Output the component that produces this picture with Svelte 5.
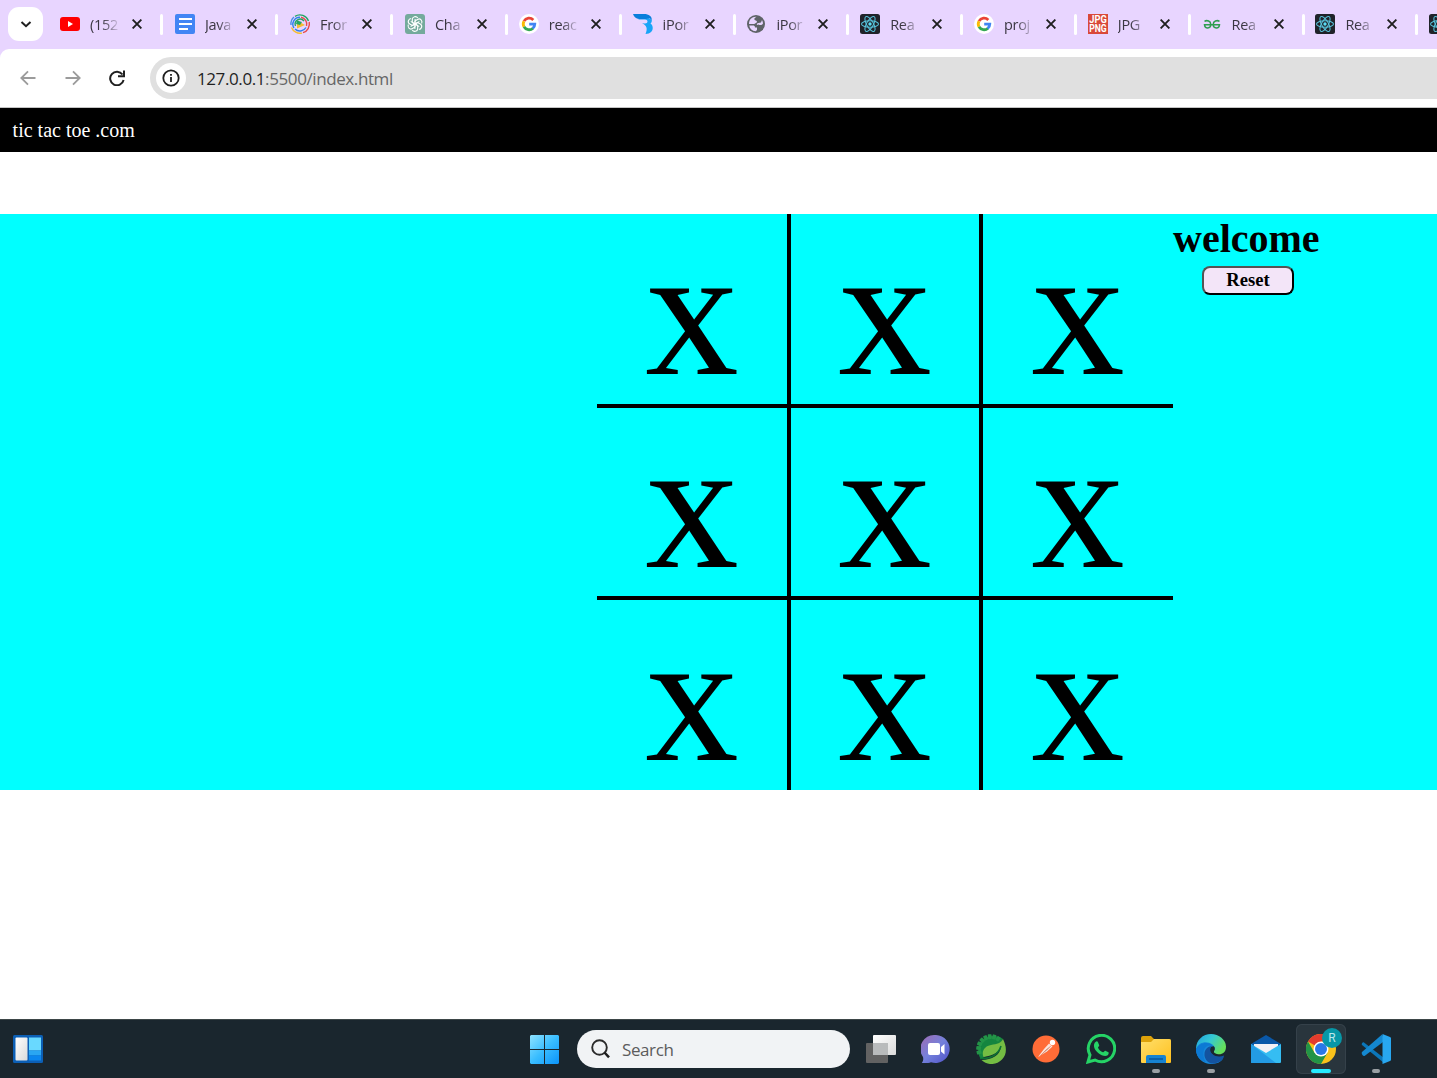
<script>
  const tabs = [
    { icon: 'youtube', title: '(152' },
    { icon: 'docs', title: 'Java' },
    { icon: 'rings', title: 'Fror' },
    { icon: 'chatgpt', title: 'Cha' },
    { icon: 'google', title: 'reac' },
    { icon: 'bird', title: 'iPor' },
    { icon: 'globe', title: 'iPor' },
    { icon: 'react', title: 'Rea' },
    { icon: 'google', title: 'proj' },
    { icon: 'jpg', title: 'JPG' },
    { icon: 'gfg', title: 'Rea' },
    { icon: 'react', title: 'Rea' },
    { icon: 'react', title: '' }
  ];
  const apps = [
    { name: 'taskview' },
    { name: 'chat' },
    { name: 'spring' },
    { name: 'postman' },
    { name: 'whatsapp' },
    { name: 'explorer', open: true },
    { name: 'edge', open: true },
    { name: 'mail' },
    { name: 'chrome', active: true },
    { name: 'vscode', open: true }
  ];
  const cells = Array(9).fill('x');
  const teeth = Array.from({ length: 8 }, (_, i) => 165 + i * 20);
</script>

{#snippet favicon(name)}
  <svg class="favicon" viewBox="0 0 20 20">
    {#if name === 'youtube'}
      <rect y="3" width="20" height="14" rx="3" fill="#f00" />
      <path d="M8 7v6l5-3z" fill="#fff" />
    {:else if name === 'docs'}
      <rect width="20" height="20" rx="2" fill="#4285f4" />
      <path d="M4 5h13M4 10h13M4 15h9" stroke="#fff" stroke-width="2" />
    {:else if name === 'rings'}
      <g fill="none" stroke-width="1.4">
        <path d="M1 11A9.2 9.2 0 0 1 4 3" stroke="#4a90e2" />
        <path d="M5 2.3A9.2 9.2 0 0 1 18.500 7" stroke="#22a565" />
        <path d="M19.200 8A9.2 9.2 0 0 1 13 18.700" stroke="#e64a4a" />
        <path d="M12 19.100A9.2 9.2 0 0 1 1.500 13.500" stroke="#f4bd32" />
        <path d="M4 14A7 7 0 0 1 10 3.200" stroke="#2f80ed" />
        <path d="M11 3.200A7 7 0 0 1 16.500 12" stroke="#e64a4a" />
        <path d="M16 13.500A7 7 0 0 1 5 15" stroke="#2f80ed" />
        <path d="M5.500 12A5 5 0 0 1 14 7" stroke="#22a565" />
      </g>
      <path d="M7 6.500l8 4.500-8 3.500z" fill="#f4bd32" />
      <path d="M7 6.500l5 1.500-2 3-4-1z" fill="#22a565" />
    {:else if name === 'chatgpt'}
      <path d="M3 0h14a3 3 0 0 1 3 3v17H3a3 3 0 0 1-3-3V3a3 3 0 0 1 3-3z" fill="#74aa9c" />
      <g fill="none" stroke="#fff" stroke-width="1.1" stroke-linejoin="round">
        {#each [0, 60, 120, 180, 240, 300] as angle}
          <path transform="rotate({angle} 10 10)" d="M7.300 8.500V5.500C7.300 2.300 11.300 1.700 12.800 4M7.300 8.500l2.700 1.600 4.400-2.500" />
        {/each}
      </g>
    {:else if name === 'google'}
      <circle cx="10" cy="10" r="10" fill="#fff" />
      <g fill="none" stroke-width="2.800">
        <path d="M5 7.200A5.800 5.800 0 0 1 14.300 6" stroke="#ea4335" />
        <path d="M5 12.800A5.800 5.800 0 0 1 5 7.200" stroke="#fbbc05" />
        <path d="M14 14.200A5.800 5.800 0 0 1 5 12.800" stroke="#34a853" />
        <path d="M10.200 10.100H15.800A5.800 5.800 0 0 1 13.700 14.500" stroke="#4285f4" />
      </g>
    {:else if name === 'bird'}
      <path d="M5 5.500h7c1.500 0 2.500.8 2.500 2s-1 2-2.500 2l-3-.2c4.500 2 6 5 3.500 10.700 5 0 7.500-3 7.200-6.500-.1-2-1-3.200-2.200-4 1.200-1 1.500-2.200 1.300-3.700L12 2z" fill="#18a4f7" />
      <path d="M0 0h11c5 0 8 2.500 7.800 6-1.800-2-3.300-2-5.800-1H6C3 4.700 1 3 0 0z" fill="#087edb" />
    {:else if name === 'globe'}
      <circle cx="10" cy="10" r="9" fill="#5f6368" />
      <path d="M10.500 2.800c-1.500 1-2.500 1.500-2 3 .3 1 2.500.5 2.500 2s-2 1.200-2.700 2.200H3C3 5.500 6 2.500 10.500 2.800z" fill="#e8d5ff" />
      <path d="M3.300 11.500h3.500c1.500 0 2.200.6 2.200 2h2v2.500l-1.300 1.200C6 17 3.700 14.500 3.300 11.500z" fill="#e8d5ff" />
      <path d="M17 9.500c-1 1.800-3 2-4.500 1l-1.500.5c-.5-1.200.2-2 1.500-2l2.500-.5 1-2.500c.6 1 1 2.200 1 3.500z" fill="#e8d5ff" />
    {:else if name === 'react'}
      <rect width="20" height="20" rx="2.500" fill="#20232a" />
      <g fill="none" stroke="#58c4dc" stroke-width="1.05">
        <ellipse cx="10" cy="10" rx="8.500" ry="3.300" />
        <ellipse cx="10" cy="10" rx="8.500" ry="3.300" transform="rotate(60 10 10)" />
        <ellipse cx="10" cy="10" rx="8.500" ry="3.300" transform="rotate(120 10 10)" />
      </g>
      <circle cx="10" cy="10" r="1.700" fill="#58dcf4" />
    {:else if name === 'jpg'}
      <rect width="20" height="20" fill="#d9493a" />
      <text class="jpg" x="10" y="9.200" textLength="17.500" lengthAdjust="spacingAndGlyphs">JPG</text>
      <text class="jpg" x="10" y="18" textLength="17.500" lengthAdjust="spacingAndGlyphs">PNG</text>
    {:else}
      <path d="M2.500 7.300C5 5.800 8.800 7 8.800 10.500 8.800 15 2.800 15 2.500 10.700H17.500C17.200 15 11.200 15 11.200 10.500 11.200 7 15 5.800 17.500 7.300" fill="none" stroke="#2f9e51" stroke-width="1.500" />
    {/if}
  </svg>
{/snippet}

{#snippet appIcon(name)}
  <svg class="app-icon" viewBox="0 0 30 30">
    {#if name === 'taskview'}
      <rect y="9" width="22" height="20" rx="1" fill="#626262" />
      <rect x="7" y="1" width="23" height="20" rx="1" fill="url(#paper)" />
      <rect x="7" y="9" width="15" height="12" fill="#b9bbbc" />
    {:else if name === 'chat'}
      <path d="M15 1a14 14 0 1 1-5 27.200C7 29.500 3 29 .8 29c1.500-2 1.700-4 1.200-6A14 14 0 0 1 15 1z" fill="url(#violet)" />
      <rect x="7" y="9" width="12" height="12" rx="2" fill="#fff" />
      <path d="M20 13l3.500-3v10.500L20 17.500z" fill="#fff" />
    {:else if name === 'spring'}
      <path d="M27 5C22 1 9 0 4 9 1 15 2 21 5 25l14-8z" fill="#14853f" />
      {#each teeth as angle}
        <rect x="25" y="13" width="4.800" height="3.800" rx=".8" fill="#239447" transform="rotate({angle} 15 15)" />
      {/each}
      <path d="M27 5c3.500 7 4.500 15-1 20.500-6 6-15 6-20.500.5C16 26 24 21 25 13 22 20 14 22 7.500 23 5 17 9 12 15 11c6-1 10-2 12-6z" fill="#74bd43" />
      <path d="M4 24.500C15 25 22 21 25 12" fill="none" stroke="#0b7434" stroke-width="1.600" />
    {:else if name === 'postman'}
      <circle cx="15" cy="15" r="13.500" fill="#ff6c37" />
      <path d="M7 23l6-8 5-5.500 3.500 3-5.500 5z" fill="#fbe4dc" />
      <circle cx="21.500" cy="8.500" r="2.700" fill="#fff" />
      <path d="M8 23l7-7 5-4" stroke="#ff8f68" stroke-width=".7" />
    {:else if name === 'whatsapp'}
      <path d="M2 28l2-7a13.200 13.200 0 1 1 5 5z" fill="none" stroke="#25d366" stroke-width="3" />
      <path d="M9.500 8c1-1 2-.8 2.500.2l1.200 3c.3.8-1.400 1.800-1.200 2.500 1 2 2.500 3.500 5 4.500.8.200 1.600-1.800 2.400-1.500l3 1.500c.7.400.2 2.200-.7 3-3.500 3-13-3-13.700-8.700C7.800 10.500 8.300 9 9.500 8z" fill="#25d366" />
    {:else if name === 'explorer'}
      <path d="M0 4a2 2 0 0 1 2-2h8l3 3h15a2 2 0 0 1 2 2v5H0z" fill="#dda20a" />
      <path d="M0 8h10l3-3h15a2 2 0 0 1 2 2v21a1 1 0 0 1-1 1H1a1 1 0 0 1-1-1z" fill="url(#folder)" />
      <path d="M5 29v-6a2 2 0 0 1 2-2h16a2 2 0 0 1 2 2v6z" fill="#1683d2" />
      <path d="M8 25h14" stroke="#07569e" stroke-width="1.500" />
    {:else if name === 'edge'}
      <path d="M0 15C0 6 7 0 15 0s15 6 15 12.500c0 7-5 8.500-9 7.500-3-.8-4-1.500-2.500-4C19 10 7 7 0 15z" fill="url(#edge-green)" />
      <path d="M0 15C4 4 19 8 19 15c-5-5-10 1-8 6 2 5 10 8 16 4C20 34 0 31 0 15z" fill="#1687d9" />
      <path d="M8.500 20c0-4 3-8 8-8-3 2-2 6 0 8 3 3 8 3 11.500 1.500C28 27 20 30 15 29.500 11 28 8 24 8.500 20z" fill="#1353a0" />
      <path d="M16.500 12C9 9 4 18 10 28.500 4 26 0 22 0 15 3 8 14 7 16.500 12z" fill="#0c79d4" />
      <path d="M18.800 14c.3 2-1.300 2.800-.8 4.300.4 1 1.500 1.500 2.500 1.700-4.500 1.300-8-3-5-7 1-1 3-1 3.300 1z" fill="#1b272e" />
    {:else if name === 'mail'}
      <path d="M0 10L15 1l15 9v8H0z" fill="#0a58a8" />
      <path d="M3 10h24v10H3z" fill="#f3f1f5" />
      <path d="M0 10l15 9 15-9v18a1 1 0 0 1-1 1H1a1 1 0 0 1-1-1z" fill="#35bdf2" />
      <path d="M0 10l25 19H1a1 1 0 0 1-1-1z" fill="#239be4" />
    {:else if name === 'chrome'}
      <circle cx="15" cy="15" r="15" fill="#f9c21b" />
      <path d="M15 15L2 7.500A15 15 0 0 1 28 7.500H15z" fill="#e33b2e" />
      <path d="M2 7.500A15 15 0 0 0 15 30l6.500-11.250L15 15 8.500 18.750z" fill="#229447" />
      <circle cx="15" cy="15" r="7.500" fill="#fff" />
      <circle cx="15" cy="15" r="6" fill="#2a78e8" />
    {:else}
      <path d="M3 8.500L23 24v5L1 11c-1-1 .8-3.300 2-2.500z" fill="#0b76b9" />
      <path d="M1 18L21 .5l3 6L3.500 22C2 22.500 0 19.500 1 18z" fill="#1488d0" />
      <path d="M21.500 0L29 3a1.500 1.500 0 0 1 1 1.500v21a1.500 1.500 0 0 1-1 1.500l-7.500 3z" fill="#28a7f0" />
    {/if}
  </svg>
{/snippet}

<svg class="defs" width="0" height="0">
  <defs>
    <linearGradient id="paper" x2="1" y2="1"><stop stop-color="#fff" /><stop offset="1" stop-color="#dadada" /></linearGradient>
    <linearGradient id="violet" x2="1" y2="1"><stop stop-color="#a06bb2" /><stop offset=".5" stop-color="#7481db" /><stop offset="1" stop-color="#4e50c8" /></linearGradient>
    <linearGradient id="folder" x2="1" y2="1"><stop stop-color="#ffdf6b" /><stop offset="1" stop-color="#ffc01e" /></linearGradient>
    <linearGradient id="edge-green" x2="1" y2=".5"><stop stop-color="#1e9fdf" /><stop offset=".5" stop-color="#35c8d4" /><stop offset="1" stop-color="#65df5b" /></linearGradient>
    <linearGradient id="win" x2="1" y2="1"><stop stop-color="#8fe3ff" /><stop offset=".5" stop-color="#39bdff" /><stop offset="1" stop-color="#0b93f9" /></linearGradient>
  </defs>
</svg>

<div class="screen">
  <header class="tabstrip">
    <button class="tab-search" aria-label="Search tabs">
      <svg width="12" height="12" viewBox="0 0 12 12"><path d="M1.500 4L6 8.200 10.500 4" fill="none" stroke="#1f1f1f" stroke-width="2" /></svg>
    </button>
    <div class="tabs">
      {#each tabs as tab}
        <div class="tab">
          {@render favicon(tab.icon)}
          <span class="tab-title">{tab.title}</span>
          <svg class="close" viewBox="0 0 10 10"><path d="M.6.6l8.800 8.800M9.400.6L.6 9.400" stroke="#1f1f1f" stroke-width="1.900" /></svg>
          <i class="separator"></i>
        </div>
      {/each}
    </div>
  </header>

  <div class="toolbar-wrap">
    <div class="toolbar">
      <svg class="nav-icon" viewBox="0 0 16 16"><path d="M15.500 8H2M8 1.300L1.300 8 8 14.700" fill="none" stroke="#9b9b9b" stroke-width="1.800" /></svg>
      <svg class="nav-icon" viewBox="0 0 16 16"><path d="M.5 8H14M8 1.300L14.700 8 8 14.700" fill="none" stroke="#9b9b9b" stroke-width="1.800" /></svg>
      <svg class="nav-icon" viewBox="0 0 16 16"><path d="M13.500 4.500A6.800 6.800 0 1 0 14.600 10M15 .5v5.700H9" fill="none" stroke="#1f1f1f" stroke-width="2" /></svg>
      <div class="address">
        <span class="site-info">
          <svg width="18" height="18" viewBox="0 0 18 18"><circle cx="9" cy="9" r="7.700" fill="none" stroke="#1f1f1f" stroke-width="1.800" /><path d="M9 8v5M9 5v1.800" stroke="#1f1f1f" stroke-width="1.800" /></svg>
        </span>
        <span class="url"><b>127.0.0.1</b>:5500/index.html</span>
      </div>
    </div>
  </div>

  <nav>tic tac toe .com</nav>

  <main>
    <div class="board">
      {#each cells as mark}
        <div class="cell">{mark}</div>
      {/each}
    </div>
    <aside>
      <h1>welcome</h1>
      <button class="reset">Reset</button>
    </aside>
  </main>

  <footer>
    <svg class="widgets" viewBox="0 0 30 28">
      <rect width="30" height="28" rx="1.500" fill="#0c5fb5" />
      <rect x="2.500" y="2.500" width="12" height="23" rx="1" fill="url(#paper)" />
      <rect x="16" y="2.500" width="12" height="13" fill="#69d9ff" />
      <rect x="16" y="15.500" width="12" height="5" fill="#2aa6f2" />
      <rect x="16" y="20.500" width="12" height="5" fill="#0b86ee" />
    </svg>
    <svg class="start" viewBox="0 0 29 29">
      <path d="M1 0h13v14H0V1zM15 0h13l1 1v13H15zM0 15h14v14H1l-1-1zM15 15h14v13l-1 1H15z" fill="url(#win)" />
    </svg>
    <div class="search">
      <svg width="19" height="20" viewBox="0 0 19 20"><circle cx="8.500" cy="8.500" r="7.300" fill="none" stroke="#2b2b2b" stroke-width="1.900" /><path d="M13.500 13.500l4.500 4.800" stroke="#1f1f1f" stroke-width="2.500" /></svg>
      <span>Search</span>
    </div>
    <div class="apps">
      {#each apps as app}
        <div class="app" class:active={app.active}>
          {@render appIcon(app.name)}
          {#if app.active}<span class="badge">R</span>{/if}
          {#if app.open || app.active}<i class="indicator"></i>{/if}
        </div>
      {/each}
    </div>
  </footer>
</div>

<style>
  :global(body) {
    margin: 0;
    overflow: hidden;
  }
  * {
    box-sizing: border-box;
  }
  svg {
    display: block;
    flex: none;
  }
  .defs {
    position: absolute;
  }
  .screen {
    width: 1437px;
    height: 1078px;
    display: flex;
    flex-direction: column;
    overflow: hidden;
    background: #fff;
    font-family: 'Open Sans', 'Noto Sans', sans-serif;
  }
  .tabstrip {
    height: 49px;
    flex: none;
    display: flex;
    align-items: flex-start;
    padding: 7px 0 0 8px;
    background: #e8d5ff;
  }
  .tab-search {
    width: 35px;
    height: 34px;
    flex: none;
    display: grid;
    place-items: center;
    padding: 0;
    border: 0;
    border-radius: 11px;
    background: #fff;
  }
  .tabs {
    display: grid;
    grid-template-columns: repeat(3, 115px) repeat(10, 113.8px);
    margin-left: 17px;
    height: 34px;
  }
  .tab {
    display: flex;
    align-items: center;
  }
  .favicon {
    width: 20px;
    height: 20px;
    overflow: visible;
  }
  .jpg {
    font: 700 10px 'Roboto', sans-serif;
    fill: #fff;
    text-anchor: middle;
  }
  .tab-title {
    width: 28px;
    margin-left: 10px;
    white-space: nowrap;
    color: #3a3641;
    font-size: 14.5px;
    letter-spacing: -0.3px;
    -webkit-mask-image: linear-gradient(90deg, #000 45%, rgba(0, 0, 0, 0.15));
    mask-image: linear-gradient(90deg, #000 45%, rgba(0, 0, 0, 0.15));
  }
  .close {
    width: 10px;
    height: 10px;
    margin-left: 14px;
  }
  .separator {
    width: 3px;
    height: 21px;
    margin-left: 18px;
    border-radius: 2px;
    background: #fff;
  }
  .toolbar-wrap {
    height: 59px;
    flex: none;
    background: #e8d5ff;
  }
  .toolbar {
    height: 59px;
    display: flex;
    align-items: center;
    padding: 0 0 2px 20px;
    border-bottom: 1px solid #c4c4c4;
    border-top-left-radius: 9px;
    background: #fff;
  }
  .nav-icon {
    width: 16px;
    height: 16px;
    margin-top: 1px;
    margin-right: 28.600px;
  }
  .nav-icon:nth-child(3) {
    margin-right: 24.800px;
  }
  .address {
    flex: 1;
    height: 42px;
    margin-top: 2px;
    display: flex;
    align-items: center;
    padding-left: 6px;
    border-radius: 21px 0 0 21px;
    background: #e0e0e0;
  }
  .site-info {
    width: 30px;
    height: 30px;
    display: grid;
    place-items: center;
    border-radius: 50%;
    background: #fff;
  }
  .url {
    margin-left: 11px;
    color: #666;
    font-size: 17px;
    letter-spacing: -0.4px;
  }
  .url b {
    color: #1f1f1f;
    font-weight: 400;
  }
  nav {
    height: 44px;
    flex: none;
    padding-left: 12.6px;
    background: #000;
    color: #fff;
    font: 20px/44px 'Liberation Serif', serif;
  }
  main {
    height: 576px;
    flex: none;
    display: flex;
    margin-top: 62px;
    padding-left: 597px;
    background: #0ff;
    color: #000;
    font-family: 'Liberation Serif', serif;
  }
  .board {
    display: grid;
    grid-template: repeat(3, 192px) / repeat(3, 192px);
  }
  .cell {
    display: flex;
    align-items: center;
    justify-content: center;
    padding-top: 4px;
    border: 0 solid #000;
    font-size: 187px;
    font-weight: 400;
    line-height: 0;
  }
  .cell:not(:nth-child(3n)) {
    border-right-width: 2px;
  }
  .cell:not(:nth-child(3n + 1)) {
    border-left-width: 2px;
  }
  .cell:nth-child(-n + 6) {
    border-bottom-width: 2px;
  }
  .cell:nth-child(n + 4) {
    border-top-width: 2px;
  }
  aside {
    display: flex;
    flex-direction: column;
    align-items: flex-start;
  }
  h1 {
    margin: 2px 0 0;
    font-size: 40px;
    line-height: 46px;
  }
  .reset {
    width: 92px;
    height: 29px;
    margin: 4px 0 0 29px;
    padding: 0 0 1px;
    border: 2px outset #000;
    border-radius: 8px;
    background: #f3e5f8;
    color: #000;
    font: 700 18.6px/22px 'Liberation Serif', serif;
  }
  footer {
    height: 59px;
    flex: none;
    display: flex;
    align-items: center;
    margin-top: auto;
    padding-left: 13px;
    border-top: 1px solid #3d4648;
    background: #1a262e;
  }
  .widgets {
    width: 30px;
    height: 28px;
  }
  .start {
    width: 29px;
    height: 29px;
    margin-left: 487px;
  }
  .search {
    width: 273px;
    height: 38px;
    display: flex;
    align-items: center;
    margin-left: 18px;
    padding-left: 14px;
    border-radius: 19px;
    background: #f1f3f5;
    color: #5c5c5c;
    font-size: 17px;
  }
  .search span {
    margin-left: 12px;
    letter-spacing: -0.4px;
  }
  .apps {
    display: flex;
    margin-left: 4px;
  }
  .app {
    position: relative;
    width: 50px;
    height: 50px;
    display: grid;
    place-items: center;
    margin: 0 3px 0 2px;
    border-radius: 6px;
  }
  .active {
    background: #29353d;
    box-shadow: inset 0 0 0 1px #35414a;
  }
  .app-icon {
    width: 30px;
    height: 30px;
  }
  .badge {
    position: absolute;
    top: 4px;
    right: 4px;
    width: 20px;
    height: 20px;
    border-radius: 50%;
    background: #0797a7;
    color: #b9e8ec;
    font: 12px/20px 'Roboto', sans-serif;
    text-align: center;
  }
  .indicator {
    position: absolute;
    bottom: 1px;
    left: 21px;
    width: 8px;
    height: 4px;
    border-radius: 2px;
    background: #9a9fa3;
  }
  .active .indicator {
    left: 15px;
    width: 20px;
    background: #26eaff;
  }
</style>
